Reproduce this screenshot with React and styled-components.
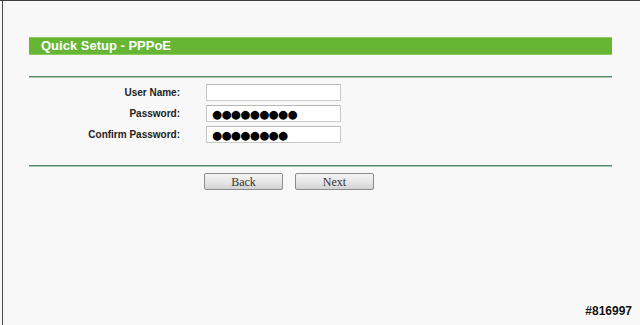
import React from "react";
import styled, { createGlobalStyle } from "styled-components";

const GlobalStyle = createGlobalStyle`
  html, body {
    margin: 0;
    padding: 0;
    height: 100%;
    background: #f8f8f8;
  }
  #root {
    height: 100%;
  }
`;

const Frame = styled.div`
  position: relative;
  height: 100%;
  box-sizing: border-box;
  border-top: 1px solid #3c3c3c;
  padding-left: 2px;
  overflow: hidden;
`;

const Panel = styled.div`
  height: 100%;
  border-left: 1px solid #4a4a4a;
  padding-left: 26px;
  padding-top: 36px;
  box-sizing: border-box;
`;

const Content = styled.div`
  width: 583px;
`;

const TitleBar = styled.div`
  height: 18px;
  background: #66b633;
  box-shadow: inset 0 1px 0 #8acb63, inset 0 -1px 0 #8acb63;
  color: #fff;
  font-family: "Liberation Sans", Arial, sans-serif;
  font-weight: bold;
  font-size: 13px;
  line-height: 18px;
  padding-left: 12px;
`;

const Rule = styled.div`
  height: 2px;
  margin-top: ${(p) => p.$top}px;
  background: linear-gradient(#5a8a6c 0 50%, #a9c6b3 50% 100%);
`;

const Form = styled.div`
  display: grid;
  grid-template-columns: 151px 135px;
  column-gap: 26px;
  row-gap: 4px;
  margin-top: 6px;
  align-items: center;
`;

const Label = styled.label`
  text-align: right;
  font-family: "Liberation Sans", Arial, sans-serif;
  font-weight: bold;
  font-size: 10px;
  transform: scaleY(1.1);
  color: #222;
`;

const Field = styled.input`
  box-sizing: border-box;
  width: 135px;
  height: 17px;
  margin: 0;
  padding: 0 0 0 5px;
  border: 1px solid #c9c9c9;
  border-top-color: #b8b8b8;
  background: #fff;
  font-family: "DejaVu Sans", sans-serif;
  font-size: 11.5px;
  letter-spacing: -0.6px;
  color: #000;
  outline: none;
`;

const Buttons = styled.div`
  display: flex;
  gap: 12px;
  margin-top: 6px;
  padding-left: 175px;
`;

const Button = styled.button`
  box-sizing: border-box;
  width: 79px;
  height: 17px;
  padding: 0;
  border: 1px solid #8c8c8c;
  border-radius: 2px;
  background: linear-gradient(#f4f4f4, #e4e4e4 60%, #d2d2d2);
  font-family: "Liberation Serif", "Times New Roman", serif;
  font-size: 12px;
  line-height: 16px;
  color: #333;
`;

const Mark = styled.div`
  position: absolute;
  right: 8px;
  bottom: 7px;
  font-family: "Liberation Sans", Arial, sans-serif;
  font-weight: bold;
  font-size: 12px;
  color: #111;
  text-shadow: 1px 0 #fff, -1px 0 #fff, 0 1px #fff, 0 -1px #fff,
    1px 1px #fff, -1px -1px #fff, 1px -1px #fff, -1px 1px #fff;
`;

const fields = [
  { label: "User Name:", value: "" },
  { label: "Password:", value: "●●●●●●●●●" },
  { label: "Confirm Password:", value: "●●●●●●●●" },
];

export default function App() {
  return (
    <>
      <GlobalStyle />
      <Frame>
        <Panel>
          <Content>
            <TitleBar>Quick Setup - PPPoE</TitleBar>
            <Rule $top={21} />
            <Form>
              {fields.map((f) => (
                <React.Fragment key={f.label}>
                  <Label>{f.label}</Label>
                  <Field type="text" value={f.value} readOnly />
                </React.Fragment>
              ))}
            </Form>
            <Rule $top={22} />
            <Buttons>
              <Button>Back</Button>
              <Button>Next</Button>
            </Buttons>
          </Content>
        </Panel>
        <Mark>#816997</Mark>
      </Frame>
    </>
  );
}
